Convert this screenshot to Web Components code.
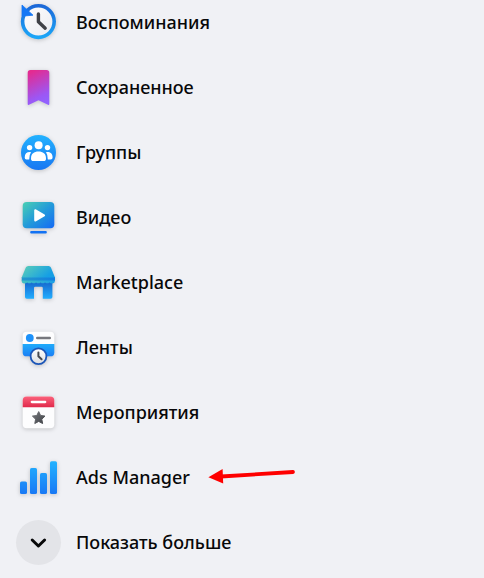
<!DOCTYPE html>
<html lang="ru">
<head>
<meta charset="utf-8">
<meta name="viewport" content="width=device-width, initial-scale=1">
<title>Меню</title>
<style>
    body{
        margin: 0;
        background-color: #f0f1f5;
        color: #080809;
        font-family: "Noto Sans", "Open Sans", sans-serif;
        font-size: 18px;
        font-weight: 500;
    }
</style>
</head>
<body>
<side-menu></side-menu>

<script>
const icons = {
    memories: `
        <defs>
            <linearGradient id="ring" x1="0" y1="0" x2="0" y2="1"><stop offset="0" stop-color="#1b68d8"/><stop offset="1" stop-color="#1ba6f8"/></linearGradient>
            <linearGradient id="face" x1="0" y1="0" x2="1" y2="1"><stop offset="0" stop-color="#fff"/><stop offset="1" stop-color="#e9eaef"/></linearGradient>
        </defs>
        <circle cx="22.4" cy="21.6" r="15.8" fill="url(#face)" stroke="url(#ring)" stroke-width="3.6"/>
        <path d="M6 5 L17 15.2 L6 16.2 Z" fill="#1477f5" stroke="#1477f5" stroke-width=".8" stroke-linejoin="round"/>
        <path d="M22.4 14 V21.8 L29.2 28.2" fill="none" stroke="#404247" stroke-width="3.4" stroke-linecap="round" stroke-linejoin="round"/>`,
    saved: `
        <defs><linearGradient id="mark" x1=".35" y1="0" x2=".65" y2="1"><stop offset="0" stop-color="#e32b91"/><stop offset=".75" stop-color="#9c57f4"/><stop offset="1" stop-color="#9162ff"/></linearGradient></defs>
        <path d="M14.4 5 H30.6 Q33.3 5 33.3 7.7 V39 Q33.3 40.4 32 39.8 L22.5 35.2 L13 39.8 Q11.7 40.4 11.7 39 V7.7 Q11.7 5 14.4 5 Z" fill="url(#mark)"/>`,
    groups: `
        <defs><linearGradient id="disc" x1="0" y1="0" x2="0" y2="1"><stop offset="0" stop-color="#23b2ff"/><stop offset="1" stop-color="#1877f2"/></linearGradient></defs>
        <circle cx="22.5" cy="22.5" r="17.5" fill="url(#disc)"/>
        <g fill="#fff">
            <circle cx="22.6" cy="15.2" r="4"/>
            <circle cx="13.6" cy="17.6" r="2.7"/>
            <circle cx="31.5" cy="17.6" r="2.7"/>
            <path d="M15 28.4 C15 23.4 18 21.4 22.5 21.4 S30 23.4 30 28.4 Q30 31 27.6 31 H17.4 Q15 31 15 28.4 Z"/>
            <path d="M15 22.2 Q13 25 13.2 29.4 H10.4 Q8.7 29.4 8.7 27.4 C8.7 23.5 11.3 21.6 15 22.2 Z"/>
            <path d="M30 22.2 Q32 25 31.8 29.4 H34.6 Q36.6 29.4 36.6 27.4 C36.6 23.5 33.8 21.6 30 22.2 Z"/>
        </g>`,
    video: `
        <defs><linearGradient id="screen" x1="0" y1="0" x2="1" y2="1"><stop offset="0" stop-color="#4ad0b3"/><stop offset=".5" stop-color="#239bd9"/><stop offset="1" stop-color="#1569f5"/></linearGradient></defs>
        <rect x="6.7" y="7" width="31.6" height="26.3" rx="4" fill="url(#screen)"/>
        <path d="M19.2 15.2 V25.6 L28.1 20.4 Z" fill="#fff" stroke="#fff" stroke-width="2" stroke-linejoin="round"/>
        <rect x="14.2" y="36" width="16.6" height="2.6" rx="1" fill="#1272f4"/>`,
    market: `
        <defs>
            <linearGradient id="roof" x1="0" y1=".2" x2="1" y2=".6"><stop offset="0" stop-color="#58ccba"/><stop offset=".9" stop-color="#169fe4"/></linearGradient>
            <linearGradient id="wall" x1="0" y1="0" x2="0" y2="1"><stop offset="0" stop-color="#155fc8"/><stop offset="1" stop-color="#22aeff"/></linearGradient>
            <linearGradient id="edge" x1="0" y1="0" x2="1" y2="0"><stop offset="0" stop-color="#43c0c0"/><stop offset="1" stop-color="#1c9fe6"/></linearGradient>
            <linearGradient id="fold" x1="0" y1="0" x2="1" y2="0"><stop offset="0" stop-color="#2597cb"/><stop offset="1" stop-color="#117ee2"/></linearGradient>
        </defs>
        <path d="M9 20 H36.4 V37 Q36.4 38.8 34.6 38.8 H26.8 V28 Q26.8 26.7 25.5 26.7 H19.4 Q18 26.7 18 28 V38.8 H10.8 Q9 38.8 9 37 Z" fill="url(#wall)"/>
        <path d="M5.7 20 H39 V20.8 Q38.8 23.4 36.6 23.4 Q34.6 23.4 33.4 22.4 Q31.8 24.2 29 22.4 Q27 24.2 24.6 22.4 Q22.5 24.2 20 22.4 Q18 24.2 15.6 22.4 Q13.4 24.2 11.2 22.4 Q10.2 23.4 8.2 23.4 Q5.7 23.4 5.7 20.8 Z" fill="url(#edge)"/>
        <path d="M5.7 17 H39 V20.6 H5.7 Z" fill="url(#fold)"/>
        <path d="M12.3 6 H32.6 Q34.3 6 34.9 7.6 L39 17.4 H5.7 L9.8 7.6 Q10.4 6 12.3 6 Z" fill="url(#roof)"/>`,
    feeds: `
        <defs>
            <linearGradient id="band" x1="0" y1="0" x2="0" y2="1"><stop offset="0" stop-color="#20abfb"/><stop offset="1" stop-color="#1b7ff5"/></linearGradient>
            <linearGradient id="dial" x1="0" y1="0" x2="0" y2="1"><stop offset="0" stop-color="#fff"/><stop offset="1" stop-color="#dcdde1"/></linearGradient>
        </defs>
        <path d="M6.7 19 V10.6 Q6.7 6.8 10.6 6.8 H34.4 Q38.3 6.8 38.3 10.6 V19 Z" fill="#fdfdfe"/>
        <path d="M6.7 19 H38.3 V27.4 Q38.3 31.3 34.4 31.3 H10.6 Q6.7 31.3 6.7 27.4 Z" fill="url(#band)"/>
        <circle cx="13.8" cy="13" r="3.9" fill="#1c91fa"/>
        <path d="M21.2 13 H33.8" stroke="#76777d" stroke-width="2.4" stroke-linecap="round"/>
        <circle cx="22.5" cy="31.3" r="7.9" fill="url(#dial)" stroke="#1c56b8" stroke-width="1.8"/>
        <path d="M22.4 27.4 V31.2 L25.6 34.3" fill="none" stroke="#484a50" stroke-width="2" stroke-linecap="round" stroke-linejoin="round"/>`,
    events: `
        <defs>
            <linearGradient id="head" x1="0" y1="0" x2="0" y2="1"><stop offset="0" stop-color="#fb627c"/><stop offset="1" stop-color="#e0294a"/></linearGradient>
            <linearGradient id="star" x1="0" y1="0" x2="1" y2="1"><stop offset="0" stop-color="#75777c"/><stop offset="1" stop-color="#404247"/></linearGradient>
        </defs>
        <rect x="6.7" y="6.4" width="31.6" height="31.8" rx="4" fill="#fdfdfe"/>
        <path d="M6.7 17.3 V10.4 Q6.7 6.4 10.7 6.4 H34.3 Q38.3 6.4 38.3 10.4 V17.3 Z" fill="url(#head)"/>
        <path d="M15.8 12 H29.2" stroke="#fff" stroke-width="2.3" stroke-linecap="round"/>
        <path d="M22.7 21.6 L24.6 25.5 L29 26.1 L25.8 29.2 L26.6 33.5 L22.7 31.4 L18.8 33.5 L19.6 29.2 L16.4 26.1 L20.8 25.5 Z" fill="url(#star)" stroke="url(#star)" stroke-width="1" stroke-linejoin="round"/>`,
    ads: `
        <defs><linearGradient id="bars" gradientUnits="userSpaceOnUse" x1="0" y1="6" x2="0" y2="39"><stop offset="0" stop-color="#22b3ff"/><stop offset="1" stop-color="#1878f5"/></linearGradient></defs>
        <g fill="url(#bars)">
            <rect x="4" y="26.6" width="7" height="12.4" rx="1.6"/>
            <rect x="14" y="13" width="7" height="26" rx="1.6"/>
            <rect x="24" y="18" width="7" height="21" rx="1.6"/>
            <rect x="34" y="6.3" width="7" height="32.7" rx="1.6"/>
        </g>`,
    more: `<path d="M16.2 20 L22.4 26 L28.6 20" fill="none" stroke="#080809" stroke-width="3" stroke-linecap="round" stroke-linejoin="round"/>`
}

class MenuIcon extends HTMLElement {
    constructor() {
        super()
        this._shadowDom = this.attachShadow({ mode: 'open' })
    }

    connectedCallback() {
        this._shadowDom.innerHTML = `
            <style>
                :host{
                    display: block;
                    flex: none;
                    width: 45px;
                    height: 45px;
                    border-radius: 50%;
                }
                :host([name="more"]){
                    background-color: #e3e4e8;
                }
                svg{
                    display: block;
                    filter: drop-shadow(0 1px 2px rgba(0, 0, 0, .2));
                }
                :host([name="more"]) svg{
                    filter: none;
                }
            </style>
            <svg width="45" height="45" viewBox="0 0 45 45" aria-hidden="true">${icons[this.getAttribute('name')]}</svg>
        `
    }
}

class MenuItem extends HTMLElement {
    constructor() {
        super()
        this._shadowDom = this.attachShadow({ mode: 'open' })
    }

    connectedCallback() {
        const icon = this.getAttribute('icon')
        const inner = `<menu-icon name="${icon}"></menu-icon><span><slot></slot></span>`

        this._shadowDom.innerHTML = `
            <style>
                :host{
                    display: flex;
                    align-items: center;
                    gap: 16px;
                }
                a, button{
                    display: flex;
                    align-items: center;
                    gap: 15px;
                    padding: 0;
                    border: 0;
                    background: none;
                    color: inherit;
                    font: inherit;
                    line-height: 24px;
                    text-align: left;
                    text-decoration: none;
                    cursor: pointer;
                }
                span{
                    padding-bottom: 2px;
                }
            </style>
            ${this.hasAttribute('expands') ? `<button type="button">${inner}</button>` : `<a href="#${icon}">${inner}</a>`}
            <slot name="pointer"></slot>
        `
    }
}

class PointerArrow extends HTMLElement {
    constructor() {
        super()
        this._shadowDom = this.attachShadow({ mode: 'open' })
    }

    connectedCallback() {
        this._shadowDom.innerHTML = `
            <style>
                :host{
                    display: block;
                }
                svg{
                    display: block;
                }
            </style>
            <svg width="90" height="20" viewBox="0 0 90 20" aria-hidden="true">
                <path d="M15 8.5 L87 4" stroke="#fe0000" stroke-width="3.8" stroke-linecap="round"/>
                <path d="M2.4 9.2 L16.6 1 L17.2 15.4 Z" fill="#fe0000"/>
            </svg>
        `
    }
}

class SideMenu extends HTMLElement {
    constructor() {
        super()
        this._shadowDom = this.attachShadow({ mode: 'open' })
    }

    connectedCallback() {
        this._shadowDom.innerHTML = `
            <style>
                :host{
                    display: block;
                }
                nav{
                    display: flex;
                    flex-direction: column;
                    gap: 20px;
                    padding: 0 16px 12px;
                }
            </style>
            <nav>
                <menu-item icon="memories">Воспоминания</menu-item>
                <menu-item icon="saved">Сохраненное</menu-item>
                <menu-item icon="groups">Группы</menu-item>
                <menu-item icon="video">Видео</menu-item>
                <menu-item icon="market">Marketplace</menu-item>
                <menu-item icon="feeds">Ленты</menu-item>
                <menu-item icon="events">Мероприятия</menu-item>
                <menu-item icon="ads">Ads Manager<pointer-arrow slot="pointer"></pointer-arrow></menu-item>
                <menu-item icon="more" expands>Показать больше</menu-item>
            </nav>
        `
    }
}

window.customElements.define('menu-icon', MenuIcon)
window.customElements.define('menu-item', MenuItem)
window.customElements.define('pointer-arrow', PointerArrow)
window.customElements.define('side-menu', SideMenu)
</script>
</body>
</html>
